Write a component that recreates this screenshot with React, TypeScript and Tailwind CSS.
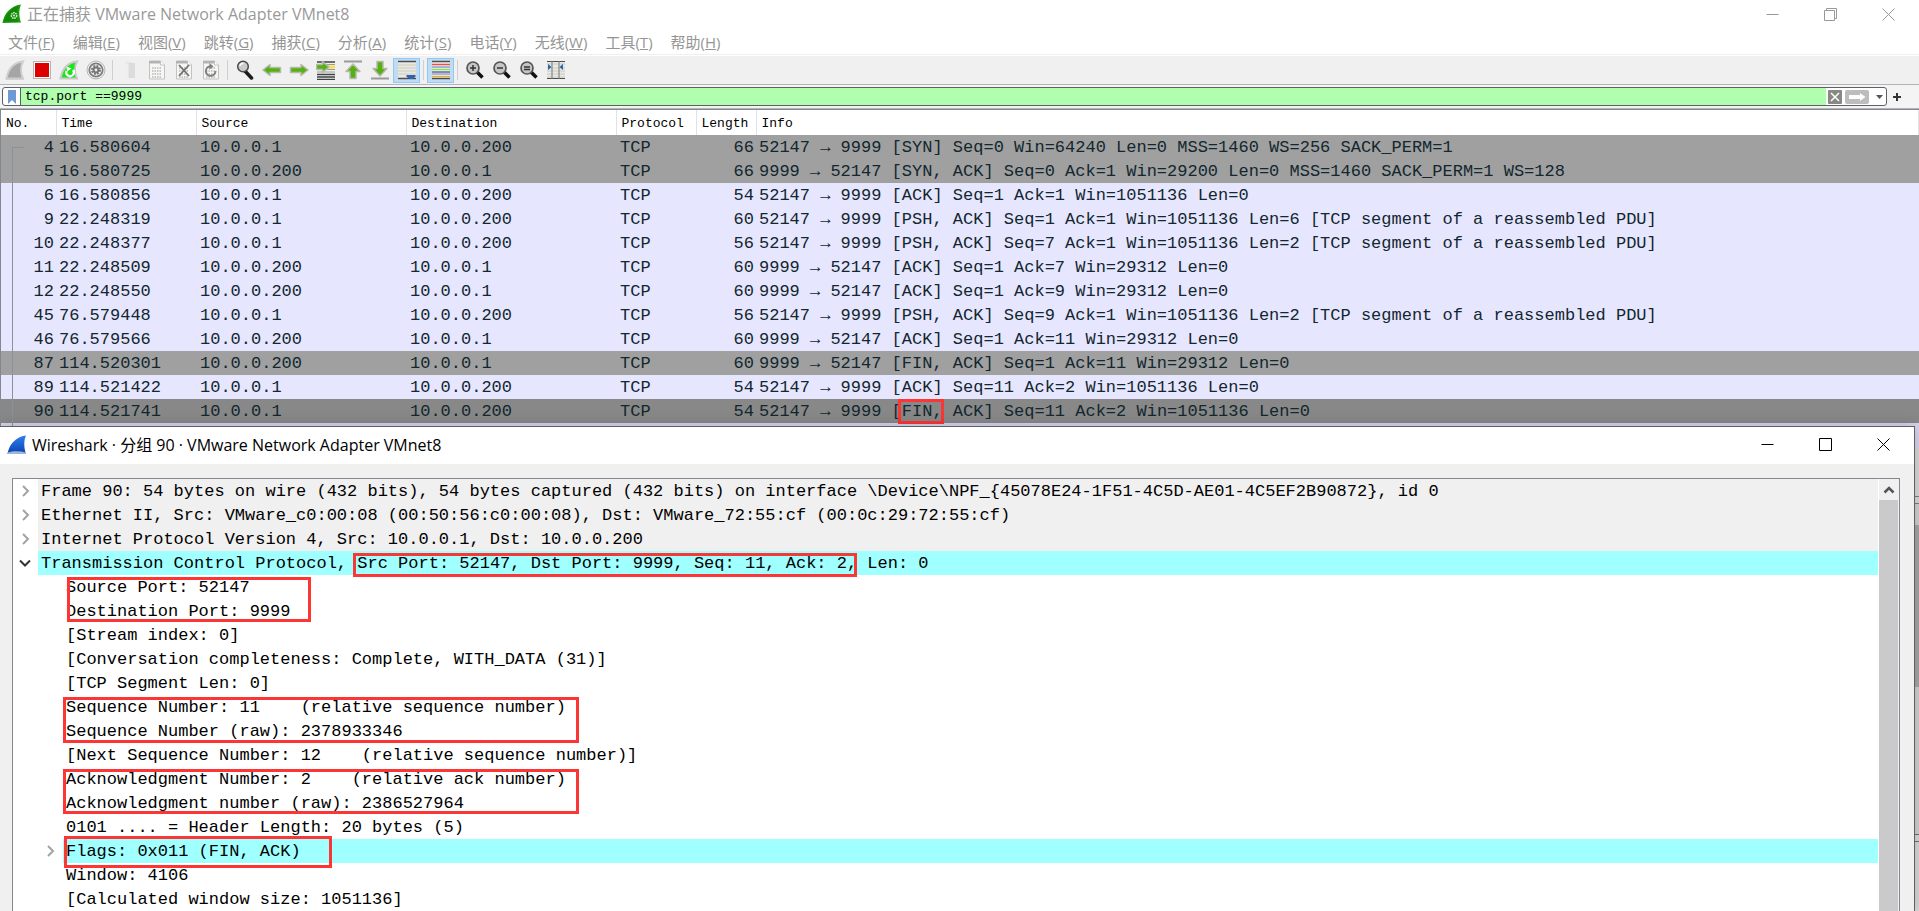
import type { ReactNode } from "react";

interface Packet {
  no: number;
  time: string;
  source: string;
  destination: string;
  length: number;
  info: string;
  tone: string;
  marked?: string;
}

interface TreeGroup {
  lines: string[];
  tone?: string;
  expandable?: boolean;
  box?: string;
}

const CLIENT = "10.0.0.1";
const SERVER = "10.0.0.200";
const GRAY = "bg-[#a0a0a0]";
const LAVENDER = "bg-[#e7e6ff]";
const SELECTED = "bg-[#888888]";

const packets: Packet[] = [
  { no: 4, time: "16.580604", source: CLIENT, destination: SERVER, length: 66, info: "52147 → 9999 [SYN] Seq=0 Win=64240 Len=0 MSS=1460 WS=256 SACK_PERM=1", tone: GRAY },
  { no: 5, time: "16.580725", source: SERVER, destination: CLIENT, length: 66, info: "9999 → 52147 [SYN, ACK] Seq=0 Ack=1 Win=29200 Len=0 MSS=1460 SACK_PERM=1 WS=128", tone: GRAY },
  { no: 6, time: "16.580856", source: CLIENT, destination: SERVER, length: 54, info: "52147 → 9999 [ACK] Seq=1 Ack=1 Win=1051136 Len=0", tone: LAVENDER },
  { no: 9, time: "22.248319", source: CLIENT, destination: SERVER, length: 60, info: "52147 → 9999 [PSH, ACK] Seq=1 Ack=1 Win=1051136 Len=6 [TCP segment of a reassembled PDU]", tone: LAVENDER },
  { no: 10, time: "22.248377", source: CLIENT, destination: SERVER, length: 56, info: "52147 → 9999 [PSH, ACK] Seq=7 Ack=1 Win=1051136 Len=2 [TCP segment of a reassembled PDU]", tone: LAVENDER },
  { no: 11, time: "22.248509", source: SERVER, destination: CLIENT, length: 60, info: "9999 → 52147 [ACK] Seq=1 Ack=7 Win=29312 Len=0", tone: LAVENDER },
  { no: 12, time: "22.248550", source: SERVER, destination: CLIENT, length: 60, info: "9999 → 52147 [ACK] Seq=1 Ack=9 Win=29312 Len=0", tone: LAVENDER },
  { no: 45, time: "76.579448", source: CLIENT, destination: SERVER, length: 56, info: "52147 → 9999 [PSH, ACK] Seq=9 Ack=1 Win=1051136 Len=2 [TCP segment of a reassembled PDU]", tone: LAVENDER },
  { no: 46, time: "76.579566", source: SERVER, destination: CLIENT, length: 60, info: "9999 → 52147 [ACK] Seq=1 Ack=11 Win=29312 Len=0", tone: LAVENDER },
  { no: 87, time: "114.520301", source: SERVER, destination: CLIENT, length: 60, info: "9999 → 52147 [FIN, ACK] Seq=1 Ack=11 Win=29312 Len=0", tone: GRAY },
  { no: 89, time: "114.521422", source: CLIENT, destination: SERVER, length: 54, info: "52147 → 9999 [ACK] Seq=11 Ack=2 Win=1051136 Len=0", tone: LAVENDER },
  { no: 90, time: "114.521741", source: CLIENT, destination: SERVER, length: 54, info: "52147 → 9999 [FIN, ACK] Seq=11 Ack=2 Win=1051136 Len=0", tone: SELECTED, marked: "FIN," },
];

const layers: TreeGroup[] = [
  {
    lines: ["Frame 90: 54 bytes on wire (432 bits), 54 bytes captured (432 bits) on interface \\Device\\NPF_{45078E24-1F51-4C5D-AE01-4C5EF2B90872}, id 0"],
    tone: "bg-[#f0f0f0]",
  },
  {
    lines: ["Ethernet II, Src: VMware_c0:00:08 (00:50:56:c0:00:08), Dst: VMware_72:55:cf (00:0c:29:72:55:cf)"],
    tone: "bg-[#f0f0f0]",
  },
  { lines: ["Internet Protocol Version 4, Src: 10.0.0.1, Dst: 10.0.0.200"], tone: "bg-[#f0f0f0]" },
];

const tcpFields: TreeGroup[] = [
  { lines: ["Source Port: 52147", "Destination Port: 9999"], box: "left-[54px] top-[2px] h-[45px] w-[244px]" },
  { lines: ["[Stream index: 0]", "[Conversation completeness: Complete, WITH_DATA (31)]", "[TCP Segment Len: 0]"] },
  {
    lines: ["Sequence Number: 11    (relative sequence number)", "Sequence Number (raw): 2378933346"],
    box: "left-[50px] top-[2px] h-[46px] w-[516px]",
  },
  { lines: ["[Next Sequence Number: 12    (relative sequence number)]"] },
  {
    lines: ["Acknowledgment Number: 2    (relative ack number)", "Acknowledgment number (raw): 2386527964"],
    box: "left-[50px] top-[2px] h-[45px] w-[516px]",
  },
  { lines: ["0101 .... = Header Length: 20 bytes (5)"] },
  { lines: ["Flags: 0x011 (FIN, ACK)"], tone: "bg-[#a0ffff]", expandable: true, box: "left-[51px] -top-[3px] h-8 w-[268px]" },
  { lines: ["Window: 4106", "[Calculated window size: 1051136]"] },
];

const menus = [
  ["文件", "F"],
  ["编辑", "E"],
  ["视图", "V"],
  ["跳转", "G"],
  ["捕获", "C"],
  ["分析", "A"],
  ["统计", "S"],
  ["电话", "Y"],
  ["无线", "W"],
  ["工具", "T"],
  ["帮助", "H"],
];

const MONO = "font-['Liberation_Mono',monospace]";
const UI = "font-['Open_Sans','Noto_Sans_CJK_SC',sans-serif]";

/* Icons */

function Icon({ children }: { children: ReactNode }) {
  return (
    <svg width="20" height="20" viewBox="0 0 20 20" fill="none" aria-hidden="true">
      {children}
    </svg>
  );
}

function CaptureFin() {
  return (
    <svg width="20" height="20" viewBox="0 0 20 20" aria-hidden="true">
      <path d="M0.500 19C2 10 8 2 19 0.500C16.500 6 17 13 19 18.500Z" fill="#1a9a0c" />
      <path d="M2 17.500C4 10 9 4 16.500 2C14 7 14 13 16 17.500Z" fill="#0d7d05" opacity="0.6" />
      <circle cx="12" cy="11.500" r="2.700" fill="none" stroke="#d9efd7" strokeWidth="1.500" strokeDasharray="1.600 0.700" />
      <circle cx="12" cy="11.500" r="1" fill="#d9efd7" />
    </svg>
  );
}

function SharkFin() {
  return (
    <svg width="20" height="20" viewBox="0 0 20 20" aria-hidden="true">
      <defs>
        <linearGradient id="shark" x1="0" y1="0" x2="0" y2="1">
          <stop offset="0" stopColor="#2f80ee" />
          <stop offset="1" stopColor="#0a3fae" />
        </linearGradient>
      </defs>
      <path d="M0.500 19C2 10 8 2 19 0.500C16.500 6 17 13 19 19Z" fill="url(#shark)" />
      <path d="M0.500 17.500C7 15.500 13 16 19 17.500V19H0.500Z" fill="#9fb6dc" />
    </svg>
  );
}

function StartIcon() {
  return (
    <Icon>
      <path d="M1.500 18.500C3 10 8 2.500 18 1.500C15.500 6 15.500 13 18 18.500Z" fill="#a5a5a5" stroke="#cfcfcf" strokeWidth="2" />
      <path d="M1 19H18.500" stroke="#c4c4c4" />
    </Icon>
  );
}

function StopIcon() {
  return (
    <Icon>
      <rect x="1.500" y="1.500" width="17" height="17" fill="#fff" stroke="#b4b4b4" />
      <rect x="3" y="3" width="14" height="14" fill="#dc0000" />
    </Icon>
  );
}

function RestartIcon() {
  return (
    <Icon>
      <path d="M1.500 18.500C3 10 8 2.500 18 1.500C15.500 6 15.500 13 18 18.500Z" fill="#19e619" stroke="#c9c9c9" strokeWidth="2" />
      <path d="M14 10A3.800 3.800 0 1 1 7.500 11" stroke="#fff" strokeWidth="2.200" />
      <path d="M7.500 6.500L12.500 8.500L8 11.500Z" fill="#fff" />
    </Icon>
  );
}

function OptionsIcon() {
  return (
    <Icon>
      <circle cx="10" cy="10" r="9" fill="#f4f4f4" stroke="#b5b5b5" />
      <circle cx="10" cy="10" r="6.700" fill="#f4f4f4" stroke="#7d7d7d" strokeWidth="1.800" />
      <circle cx="10" cy="10" r="4" stroke="#777" strokeWidth="2" strokeDasharray="1.900 1.240" />
      <circle cx="10" cy="10" r="3.400" fill="#777" />
      <circle cx="10" cy="10" r="1.400" fill="#f0f0f0" />
    </Icon>
  );
}

function OpenIcon() {
  return (
    <Icon>
      <path d="M4 2H12V17L8 18L4 16Z" fill="#e6e6e6" />
      <path d="M9 3H15V18H9Z" fill="#dcdcdc" />
      <path d="M4 2L8 4V18L4 16Z" fill="#efefef" />
    </Icon>
  );
}

function DocIcon({ children }: { children?: ReactNode }) {
  return (
    <Icon>
      <path d="M2.500 1H13.500L17.500 5V19H2.500Z" fill="#f6f6f4" stroke="#c2c2c2" />
      <path d="M2 1H13.500L15 3.500H2Z" fill="#b3b3b3" />
      <path d="M13.500 1V5H17.500" fill="#fff" stroke="#c2c2c2" />
      <path d="M5 8H15M5 11H15M5 14H15M5 17H15" stroke="#c8c8c8" strokeWidth="2" strokeDasharray="1.500 1" />
      {children}
    </Icon>
  );
}

function FindIcon() {
  return (
    <Icon>
      <path d="M10 11L16.500 18" stroke="#1c1c1c" strokeWidth="3.500" strokeLinecap="round" />
      <circle cx="8" cy="6.500" r="5.300" fill="#c9ccce" stroke="#4a4a4a" strokeWidth="1.500" />
      <path d="M5 6A3 3 0 0 1 8.500 3.500" stroke="#fff" strokeWidth="1.500" />
    </Icon>
  );
}

function Arrow({ d }: { d: string }) {
  return <path d={d} fill="#58b010" stroke="#b4bbae" strokeWidth="1.500" strokeLinejoin="round" />;
}

function GoToIcon() {
  return (
    <Icon>
      <path d="M1 2H19M1 14.500H19M1 17H19M1 19.500H19" stroke="#3f4241" strokeWidth="1.500" />
      <path d="M10 4.500H19M10 9.500H19M1 12H19" stroke="#9a9a98" />
      <path d="M12 7H19" stroke="#f4e04a" strokeWidth="3" />
      <Arrow d="M0.500 4.500H6.500V1.500L13 7L6.500 12.500V9.500H0.500Z" />
    </Icon>
  );
}

function AutoScrollIcon() {
  return (
    <Icon>
      <rect x="1" y="1" width="18" height="18" fill="#e9e9e2" />
      <path d="M1 1.500H19M1 18.500H19" stroke="#4b4e50" strokeWidth="1.500" />
      <path d="M1 5H19M1 8H19M1 11H19M1 14H19" stroke="#cbccc4" />
      <path d="M9.500 15H18.500V16.500L16 19H12L9.500 16.500Z" fill="#2f63ad" />
    </Icon>
  );
}

function ColorizeIcon() {
  return (
    <Icon>
      <rect x="1" y="1" width="18" height="18" fill="#f3f3ee" />
      <path d="M1 1.500H19M1 18.500H19" stroke="#4b4e50" strokeWidth="1.500" />
      <path d="M1 4.500H19" stroke="#ef4b4b" strokeWidth="1.500" />
      <path d="M1 7H19" stroke="#4b7ad0" strokeWidth="1" />
      <path d="M1 9.500H19" stroke="#8fdc4c" strokeWidth="1.500" />
      <path d="M1 12H19" stroke="#4b6fb0" strokeWidth="1.500" />
      <path d="M1 14H19" stroke="#8a6aa8" strokeWidth="1" />
      <path d="M1 16.500H19" stroke="#dcb440" strokeWidth="1.500" />
    </Icon>
  );
}

function ZoomIcon({ d }: { d: string }) {
  return (
    <Icon>
      <path d="M12 12L17.500 17.500" stroke="#111" strokeWidth="3.500" />
      <circle cx="8" cy="8" r="6" fill="#c4c6c8" stroke="#555" strokeWidth="1.700" />
      <path d={d} stroke="#333" strokeWidth="1.500" />
    </Icon>
  );
}

function ResizeIcon() {
  return (
    <Icon>
      <rect x="1" y="1" width="18" height="18" fill="#e9e9e2" />
      <path d="M1 4H19M1 8H19M1 11H19M1 14H19M1 17H19" stroke="#cbccc4" />
      <path d="M1 1.500H19M1 18.500H19" stroke="#4b4e50" />
      <path d="M6 1V19M13 1V19" stroke="#777" />
      <path d="M2 4L5.500 7L2 10ZM17 4L13.500 7L17 10Z" fill="#2f63ad" />
    </Icon>
  );
}

type Tool = { label: string; icon: ReactNode; active?: boolean } | "sep";

const tools: Tool[] = [
  { label: "开始捕获", icon: <StartIcon /> },
  { label: "停止捕获", icon: <StopIcon /> },
  { label: "重新开始", icon: <RestartIcon /> },
  { label: "捕获选项", icon: <OptionsIcon /> },
  "sep",
  { label: "打开", icon: <OpenIcon /> },
  { label: "保存", icon: <DocIcon /> },
  { label: "关闭文件", icon: <DocIcon><path d="M5 5L15 16M15 5L5 16" stroke="#727272" strokeWidth="1.800" /></DocIcon> },
  { label: "重新载入", icon: <DocIcon><path d="M14.500 11A4.800 4.800 0 1 1 9 6.300" stroke="#7f7f7f" strokeWidth="2" /><path d="M8.500 3L12.500 6.500L8.500 9.500Z" fill="#7f7f7f" /></DocIcon> },
  "sep",
  { label: "查找", icon: <FindIcon /> },
  { label: "上一分组", icon: <Icon><Arrow d="M1 10L8 4.500V7.500H18.500V12.500H8V15.500Z" /></Icon> },
  { label: "下一分组", icon: <Icon><Arrow d="M19 10L12 4.500V7.500H1.500V12.500H12V15.500Z" /></Icon> },
  { label: "转到分组", icon: <GoToIcon /> },
  { label: "首个分组", icon: <Icon><path d="M1 1.500H19" stroke="#9b9b9b" strokeWidth="2" /><Arrow d="M10 4L17 11.500H13V18.500H7V11.500H3Z" /></Icon> },
  { label: "末个分组", icon: <Icon><path d="M1 18.500H19" stroke="#9b9b9b" strokeWidth="2" /><Arrow d="M10 16L17 8.500H13V1.500H7V8.500H3Z" /></Icon> },
  { label: "自动滚动", icon: <AutoScrollIcon />, active: true },
  "sep",
  { label: "着色", icon: <ColorizeIcon />, active: true },
  "sep",
  { label: "放大", icon: <ZoomIcon d="M5 8H11M8 5V11" /> },
  { label: "缩小", icon: <ZoomIcon d="M5 8H11" /> },
  { label: "正常大小", icon: <ZoomIcon d="M5 7H11M5 9.500H11" /> },
  { label: "调整列宽", icon: <ResizeIcon /> },
];

/* Shared pieces */

function WindowButtons({ restored }: { restored?: boolean }) {
  return (
    <div className="flex h-full items-center pr-[2px]">
      <button type="button" aria-label="最小化" className="flex w-[58px] justify-center">
        <svg width="13" height="13" viewBox="0 0 13 13" fill="none" stroke="currentColor"><path d="M0.500 6.500H12.500" /></svg>
      </button>
      <button type="button" aria-label="最大化" className="flex w-[58px] justify-center">
        <svg width="13" height="13" viewBox="0 0 13 13" fill="none" stroke="currentColor">
          {restored ? <path d="M0.500 2.500H10.500V12.500H0.500ZM2.500 2.500V0.500H12.500V10.500H10.500" /> : <path d="M0.500 0.500H12.500V12.500H0.500Z" />}
        </svg>
      </button>
      <button type="button" aria-label="关闭" className="flex w-[58px] justify-center">
        <svg width="13" height="13" viewBox="0 0 13 13" fill="none" stroke="currentColor"><path d="M0.500 0.500L12.500 12.500M12.500 0.500L0.500 12.500" /></svg>
      </button>
    </div>
  );
}

function Marked({ children, box }: { children: ReactNode; box: string }) {
  return (
    <span className="relative inline-block">
      {children}
      <span className={`pointer-events-none absolute border-3 border-[#fc3535] ${box}`} />
    </span>
  );
}

function Chevron({ open }: { open?: boolean }) {
  return (
    <button type="button" aria-label={open ? "折叠" : "展开"} className="flex h-6 w-[25px] shrink-0 items-center pl-[5px]">
      <svg width="14" height="14" viewBox="0 0 14 14" fill="none" strokeWidth="2">
        {open ? <path d="M2 4.500L7 9.500L12 4.500" stroke="#333" /> : <path d="M5 2L10 7L5 12" stroke="#a3a3a3" />}
      </svg>
    </button>
  );
}

function TreeRow({ group, child }: { group: TreeGroup; child?: boolean }) {
  return (
    <li className="relative">
      {group.lines.map((line) => (
        <div key={line} className={`flex h-6 ${child ? "pl-[25px]" : ""}`}>
          {!child || group.expandable ? <Chevron /> : <span className="w-[25px] shrink-0" />}
          <span className={`grow pt-[2px] pl-[3px] ${group.tone ?? ""}`}>{line}</span>
        </div>
      ))}
      {group.box && <span className={`pointer-events-none absolute border-3 border-[#fc3535] ${group.box}`} />}
    </li>
  );
}

function Info({ packet }: { packet: Packet }) {
  if (!packet.marked) return <>{packet.info}</>;
  const [before, after] = packet.info.split(packet.marked);
  return (
    <>
      {before}
      <Marked box="-top-[2px] -right-px -bottom-px -left-1">{packet.marked}</Marked>
      {after}
    </>
  );
}

function PacketTable() {
  return (
    <table className={`w-full table-fixed border-collapse ${MONO}`}>
      <colgroup>
        <col className="w-[55px]" />
        <col className="w-[140px]" />
        <col className="w-[210px]" />
        <col className="w-[210px]" />
        <col className="w-20" />
        <col className="w-[60px]" />
        <col />
      </colgroup>
      <thead>
        <tr className="h-[25px] bg-white text-left text-[13px] leading-[22px] text-black">
          {["No.", "Time", "Source", "Destination", "Protocol", "Length", "Info"].map((name) => (
            <th key={name} scope="col" className="border-r border-[#e2e2e2] p-0 pt-[2px] pl-[5px] font-normal">
              {name}
            </th>
          ))}
        </tr>
      </thead>
      <tbody className="text-[17px] leading-[22px] whitespace-pre text-[#12272e]">
        {packets.map((p, i) => (
          <tr key={p.no} className={`h-6 ${p.tone}`}>
            <td className="relative p-0 pt-[2px] pr-[2px] text-right">
              <span className={`absolute bottom-0 left-[11px] border-l border-[#8a9299] ${i === 0 ? "top-3 w-3 border-t" : "top-0"}`} />
              {p.no}
            </td>
            <td className="p-0 pt-[2px] pl-[3px]">{p.time}</td>
            <td className="p-0 pt-[2px] pl-1">{p.source}</td>
            <td className="p-0 pt-[2px] pl-1">{p.destination}</td>
            <td className="p-0 pt-[2px] pl-1">TCP</td>
            <td className="p-0 pt-[2px] pr-[2px] text-right">{p.length}</td>
            <td className="p-0 pt-[2px] pl-[3px]">
              <Info packet={p} />
            </td>
          </tr>
        ))}
        <tr className="h-6 bg-[#d8d4f0]">
          <td className="relative p-0" colSpan={7}>
            <span className="absolute top-0 bottom-0 left-[11px] border-l border-[#8a9299]" />
          </td>
        </tr>
      </tbody>
    </table>
  );
}

function PacketDialog() {
  return (
    <section className={`absolute top-[426px] right-1 bottom-0 left-0 flex flex-col border-t border-r border-[#5f5f66] bg-[#f0f0f0] shadow-[0_0_14px_rgba(0,0,0,0.2)] ${UI}`}>
      <header className="flex h-[37px] shrink-0 items-center justify-between bg-white pb-[2px] pl-[7px] text-black">
        <div className="flex items-center gap-[5px]">
          <SharkFin />
          <h2 className="text-[16px] leading-6">Wireshark · 分组 90 · VMware Network Adapter VMnet8</h2>
        </div>
        <WindowButtons />
      </header>
      <div className="mt-[14px] mr-[14px] ml-3 flex min-h-0 grow border border-b-0 border-[#828790] bg-white">
        <ul className={`min-w-0 grow overflow-hidden text-[17px] leading-[22px] whitespace-pre text-black ${MONO}`}>
          {layers.map((g) => (
            <TreeRow key={g.lines[0]} group={g} />
          ))}
          <li>
            <div className="flex h-6">
              <Chevron open />
              <span className="grow bg-[#a0ffff] pt-[2px] pl-[3px]">
                Transmission Control Protocol,{" "}
                <Marked box="top-0 right-0 -bottom-[2px] -left-1">Src Port: 52147, Dst Port: 9999, Seq: 11, Ack: 2,</Marked>
                {" "}Len: 0
              </span>
            </div>
            <ul>
              {tcpFields.map((g) => (
                <TreeRow key={g.lines[0]} group={g} child />
              ))}
            </ul>
          </li>
        </ul>
        <div className="ml-px flex w-5 shrink-0 flex-col bg-[#f0f0f0] pr-px">
          <button type="button" aria-label="向上滚动" className="flex h-[21px] items-center justify-center">
            <svg width="12" height="12" viewBox="0 0 12 12" fill="none" stroke="#555" strokeWidth="2.500"><path d="M1.500 8.500L6 4L10.500 8.500" /></svg>
          </button>
          <div className="grow bg-[#cacaca]" />
        </div>
      </div>
    </section>
  );
}

export default function App() {
  return (
    <main className={`relative flex h-screen flex-col overflow-hidden bg-white ${UI}`}>
      <header className="flex h-7 shrink-0 items-center justify-between pl-[2px] text-[#999]">
        <div className="flex items-center gap-[5px]">
          <CaptureFin />
          <h1 className="text-[16px] leading-6">正在捕获 VMware Network Adapter VMnet8</h1>
        </div>
        <WindowButtons restored />
      </header>

      <nav className="flex h-[27px] shrink-0 items-center gap-[2px] border-b border-[#efefef] pt-[2px] text-[15px] text-[#959595]">
        {menus.map(([name, key]) => (
          <button key={key} type="button" className="px-2 leading-6">
            {name}(<u>{key}</u>)
          </button>
        ))}
      </nav>

      <div className="mt-px flex h-[29px] shrink-0 items-center border-b border-[#b4b4b8] bg-[#f0f0f0] pl-px">
        {tools.map((tool, i) =>
          tool === "sep" ? (
            <span key={i} className="mx-[3px] h-5 w-px bg-[#cfcfcf]" />
          ) : (
            <button
              key={i}
              type="button"
              aria-label={tool.label}
              className={`flex h-[25px] w-[27px] items-center justify-center ${tool.active ? "border border-[#90c8f6] bg-[#c0dcf3]" : ""}`}
            >
              {tool.icon}
            </button>
          )
        )}
      </div>

      <div className="flex h-6 shrink-0 items-center border-b border-[#b4b4b8] bg-[#f4f4f4] pl-[2px]">
        <div className="flex h-[19px] grow items-stretch overflow-hidden rounded-[3px] border border-[#5f5f66] bg-white">
          <button type="button" aria-label="书签" className="flex w-[18px] items-center justify-center border-r border-[#5f5f66]">
            <svg width="10" height="14" viewBox="0 0 10 14"><path d="M1 0H9V14L5 10L1 14Z" fill="#6d9ad2" /></svg>
          </button>
          <input
            type="text"
            aria-label="显示过滤器"
            defaultValue="tcp.port ==9999"
            className={`min-w-0 grow bg-[#afffaf] pt-px pl-1 text-[13px] text-black outline-none ${MONO}`}
          />
          <button type="button" aria-label="清除" className="ml-px flex w-[15px] items-center justify-center">
            <svg width="14" height="14" viewBox="0 0 14 14"><rect width="14" height="14" rx="1" fill="#868a83" /><path d="M3 3L11 11M11 3L3 11" stroke="#fff" strokeWidth="1.500" /></svg>
          </button>
          <button type="button" aria-label="应用" className="flex w-[30px] items-center justify-center">
            <svg width="24" height="14" viewBox="0 0 24 14"><rect width="24" height="14" rx="2" fill="#bdbdbd" /><path d="M4 5H15V3L20.500 7L15 11V9H4Z" fill="#fff" /></svg>
          </button>
          <button type="button" aria-label="历史" className="flex w-[14px] items-center justify-center">
            <svg width="7" height="4" viewBox="0 0 7 4"><path d="M0 0H7L3.500 4Z" fill="#555" /></svg>
          </button>
        </div>
        <button type="button" aria-label="添加" className="flex w-8 items-center pl-[6px]">
          <svg width="8" height="8" viewBox="0 0 8 8"><path d="M4 0V8M0 4H8" stroke="#333" strokeWidth="2" /></svg>
        </button>
      </div>

      <div className="shrink-0 border-t border-l border-[#828790]">
        <PacketTable />
      </div>

      {/* Lower panes, mostly covered by the packet window */}
      <div className="flex min-h-0 grow flex-col bg-[#d8d8d8]">
        <div className="h-[49px] shrink-0" />
        <div className="h-2 shrink-0 border-y border-[#7c7c82]" />
        <div className="grow bg-[#cfcfcf] pt-[21px]">
          <div className="ml-auto h-[162px] w-1 bg-[#a6a6a6]" />
        </div>
        <div className="h-2 shrink-0 border-y border-[#6e6e74]" />
        <div className="h-[69px] shrink-0" />
      </div>

      <PacketDialog />
    </main>
  );
}
